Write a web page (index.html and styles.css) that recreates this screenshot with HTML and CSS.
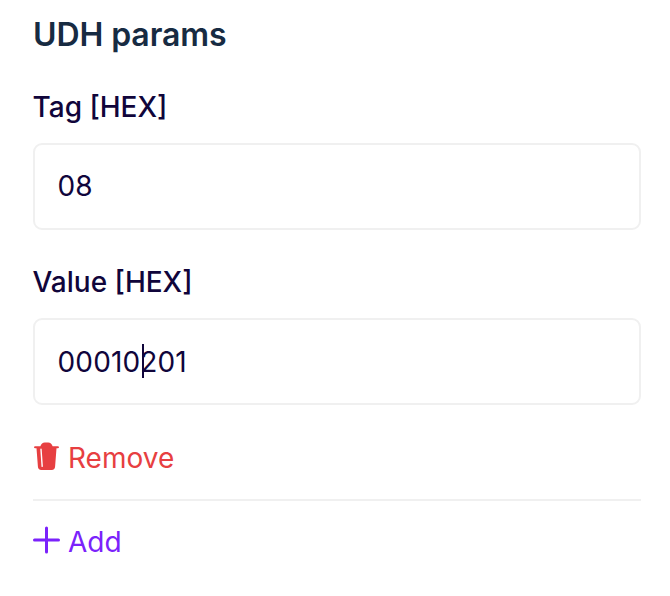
FILE: index.html
```html
<!DOCTYPE html>
<html lang="en">
<head>
    <meta charset="UTF-8">
    <meta name="viewport" content="width=device-width, initial-scale=1.0">
    <title>UDH params</title>
    <link rel="stylesheet" href="styles.css">
</head>
<body>
    <div class="udh-params">
        <h2 class="title">UDH params</h2>
        <div class="field">
            <div class="label">Tag [HEX]</div>
            <div class="input">08</div>
        </div>
        <div class="field">
            <div class="label">Value [HEX]</div>
            <div class="input focused">00010<span class="caret"></span>201</div>
        </div>
        <div class="action remove">
            <svg class="icon" viewBox="0 0 27 28">
                <path fill="currentColor" d="M2.3 4.2 H7.4 C8 1.8 9.8 0.4 11.8 0.4 H15.2 C17.2 0.4 19 1.8 19.6 4.2 H24.7 Q26 4.2 26 5.2 Q26 6.2 24.7 6.2 H23.5 L22.1 24.6 Q21.9 28 18.7 28 H8.3 Q5.1 28 4.9 24.6 L3.5 6.2 H2.3 Q1 6.2 1 5.2 Q1 4.2 2.3 4.2 Z"/>
                <path stroke="#fff" stroke-width="1.4" stroke-linecap="round" fill="none" d="M8 7.2 L9.2 24.4"/>
            </svg>
            <span>Remove</span>
        </div>
        <div class="action add">
            <svg class="icon" viewBox="0 0 27 28">
                <path stroke="currentColor" stroke-width="3" stroke-linecap="round" d="M13.5 2 V26 M1.5 14 H25.5"/>
            </svg>
            <span>Add</span>
        </div>
    </div>
</body>
</html>
```

FILE: styles.css
```css
body {
    margin: 0;
    background-color: #fff;
    font-family: Inter, sans-serif;
    color: #10053b;
}
.udh-params {
    padding: 15px 29px 0 33px;
}
.title {
    margin: 0 0 32px;
    font-size: 32px;
    line-height: 40px;
    font-weight: 600;
    letter-spacing: -0.1px;
    color: #172b42;
}
.field {
    margin-bottom: 32px;
}
.label {
    margin: 0 0 16px -0.5px;
    font-size: 28px;
    line-height: 40px;
    font-weight: 500;
}
.input {
    box-sizing: border-box;
    height: 87px;
    padding: 0 22.5px;
    border: 2px solid #f0f0f0;
    border-radius: 9px;
    font-size: 28px;
    line-height: 83px;
}
.focused {
    line-height: 85px;
    letter-spacing: 0.15px;
}
.caret {
    display: inline-block;
    width: 2px;
    height: 34px;
    margin: 0 -4px 0 2px;
    background-color: #10053b;
    vertical-align: -6px;
}
.action {
    display: flex;
    align-items: center;
    gap: 8px;
    font-size: 28px;
    line-height: 40px;
}
.icon {
    width: 27px;
    height: 28px;
    margin-bottom: 4px;
}
.remove {
    padding: 1px 0 21px;
    border-bottom: 2px solid #f0f0f0;
    color: #e73f41;
}
.add {
    margin-top: 21px;
    color: #7b22fb;
}
```
